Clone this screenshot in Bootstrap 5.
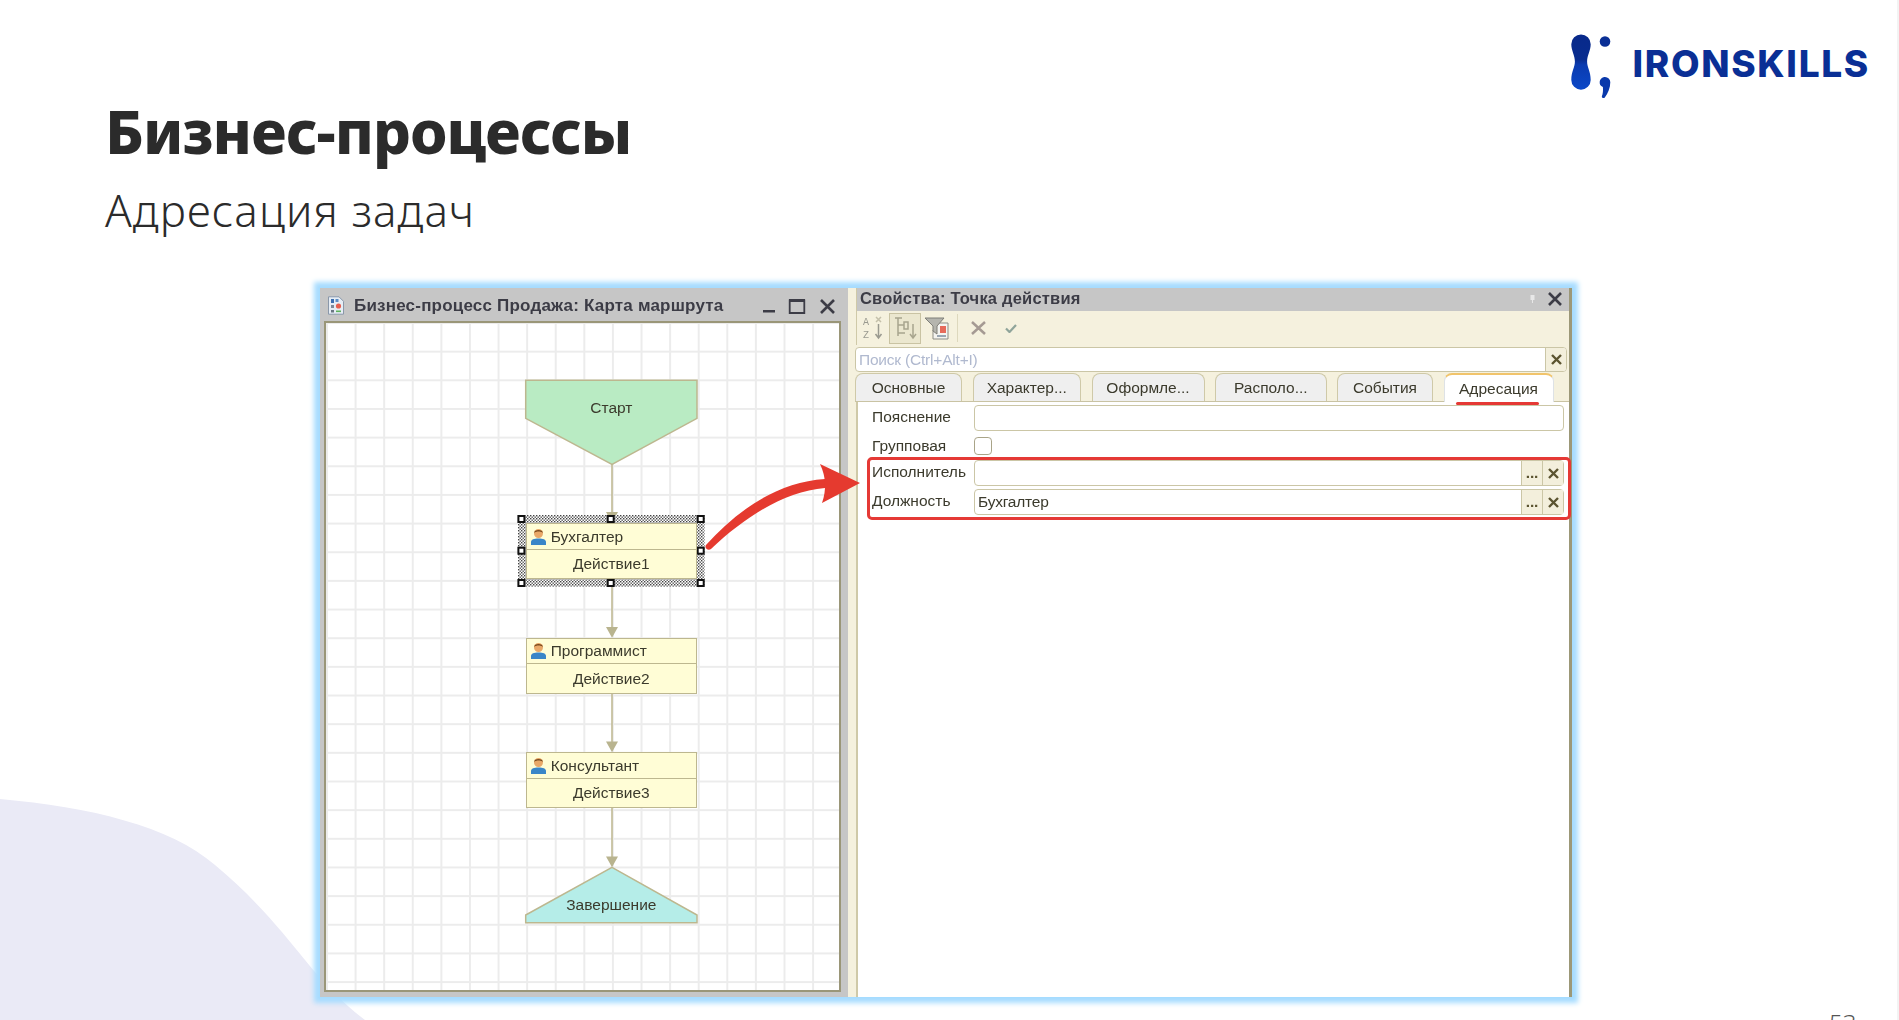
<!DOCTYPE html>
<html lang="ru">
<head>
<meta charset="utf-8">
<title>Бизнес-процессы</title>
<link href="https://cdn.jsdelivr.net/npm/bootstrap@5.3.0/dist/css/bootstrap.min.css" rel="stylesheet">
<style>
html,body{margin:0;background:#fff}
.slide{position:relative;width:1899px;height:1020px;overflow:hidden;background:#fff;border-right:2px solid #f3f3f3;font-family:"Noto Sans","Open Sans",sans-serif;color:#2b2b2b}
.blob{position:absolute;left:0;top:780px;width:380px;height:240px}
.slide-head{position:relative;height:288px;padding:0 27px 0 105px}
.ttl{margin:0;padding-top:92px;font-family:"Noto Sans",sans-serif;font-weight:800;font-size:60px;line-height:78px;letter-spacing:-1.05px;color:#2b2b2b}
.sub{margin:0;padding-top:12px;font-family:"Noto Sans",sans-serif;font-weight:300;font-size:44px;line-height:56px;letter-spacing:1.1px;color:#2b2b2b}
.brand{padding-top:32px;gap:20px}
.brand svg{width:44px;height:70px}
.brand-name{font-family:Inter,sans-serif;font-weight:800;font-size:37px;line-height:1;letter-spacing:1.7px;color:#0a2f95;margin-top:13px}
.shot{position:relative;margin-left:320px;width:1252px;height:709px;box-shadow:0 0 5px 6px #a6dcff;background:#fff}
.shot-inner{width:100%;height:100%;filter:blur(.45px);font-family:"Liberation Sans",sans-serif;font-size:15.5px;color:#3b3a2c}
.route{width:528px;background:#c6c6c6;padding:0 7px 3px 4px}
.route-bar{height:33px;padding:2px 0 0 3px;font-weight:700;font-size:17px;letter-spacing:.2px;color:#3c3c46}
.bar-name{margin-left:9px}
.ctl{margin-left:auto;margin-right:2px}
.canvas{position:relative;width:517px;height:671px;border:2px solid #9a9678;background-color:#fff;background-image:linear-gradient(#ececec 2px,transparent 2px),linear-gradient(90deg,#ececec 2px,transparent 2px);background-size:28.6px 28.67px;background-position:0 -1px}
.diagram{position:absolute;left:0;top:0;width:513px;height:669px}
.proc{position:absolute;left:199.7px;width:171.3px;background:#fffdd6;border:1.5px solid #bdb78f;font-size:15.5px}
.p1{top:200.3px;height:56px}.p2{top:314.7px;height:56px}.p3{top:429.3px;height:56px}
.proc-who{height:25.5px;border-bottom:1.5px solid #bdb78f;padding-left:4px;gap:5px}
.proc-who svg{width:15px;height:17px}
.proc-act{height:28px}
.shape-text{position:absolute;left:199.7px;width:171.3px;text-align:center;line-height:20px}
.s-start{top:75px}.s-end{top:572px}
.strip{width:9px;background:#f5f1de;border-right:1px solid #cfc9a8}
.props{width:712px;background:#fff}
.edge{width:3px;background:#9c9878}
.props-bar{height:23px;background:#c6c6c6;padding:0 7px 2px 3px;font-weight:700;font-size:16.5px;letter-spacing:.2px;color:#3c3c46}
.pin{margin-left:auto;margin-right:13px}
.tools{height:34px;background:#f5f1de}
.tool{width:32px;height:31px;border:1.5px solid transparent}
.tool-on{background:#ebe7cf;border-color:#c9c3a3}
.tool-sep{width:1px;height:28px;background:#ddd8bd;margin:0 13px 0 4px}
.chk{margin-left:19px}
.finder{height:28px;background:#f5f1de;padding:2px 2px 1px 0;margin-left:-2px}
.field{display:flex;align-items:center;height:25px;min-height:0;padding:0 0 0 3px;border:1.5px solid #cbc6a6;border-radius:4px;background:#fff;font-size:15.5px;color:#3b3a2c;line-height:1;letter-spacing:-.2px;box-shadow:none}
.finder .field{color:#b0b9cf;flex:1;overflow:hidden;padding-right:0}
.fld-btn{width:21px;height:100%;background:#f3efdc;border-left:1.5px solid #cbc6a6;display:flex;align-items:center;justify-content:center;font-weight:700;color:#5b5430;flex:none}
.fld-val{flex:1}
.tabs-row{height:29px;background:#f5f1de;gap:10.5px;border-bottom:1.5px solid #c9c3a3;flex-wrap:nowrap;padding-left:0;margin-left:-2px}
.tabs-row .nav-link{height:28px;padding:0;display:flex;align-items:center;justify-content:center;border:1.5px solid #cfc9a8;border-bottom:0;border-radius:8px 8px 0 0;background:#efefef;color:#3b3a2c;font-size:15.5px;margin:0}
.tabs-row .nav-link.active{background:#fff;border-top:2px solid #f1c46b;color:#3b3a2c;position:relative;height:29px}
.t1{width:107px}.t2{width:108.5px}.t3{width:113px}.t4{width:111.5px}.t5{width:96px}.t6{width:110px}
.underline{position:absolute;left:11px;right:14px;bottom:-3px;height:3.5px;background:#e53935;border-radius:2px}
.form-pane{flex:1;background:#fff;border-left:1.5px solid #cfc9a8;padding:3px 5px 0 14px}
.line{height:26px;margin-bottom:3px}
.line-flush{margin-bottom:0}
.line-lbl{width:102px;flex:none;font-size:15.5px;padding-bottom:2px}
.form-pane .field{flex:1;height:26px}
.box{width:18px;height:18px;margin:0 0 2px;border:1.5px solid #a9a488;border-radius:4px;background:#fff}
.frame-red{position:absolute;left:546.5px;top:168.5px;width:704px;height:63px;border:3.5px solid #e53935;border-radius:5px}
.curve{position:absolute;left:380px;top:167px;width:170px;height:95px}
.pg{position:absolute;left:1829px;top:1006px;font-family:"Noto Sans",sans-serif;font-weight:300;font-size:24px;line-height:34px;color:#555}
</style>
</head>
<body>
<div class="slide">
  <svg class="blob" viewBox="0 0 380 240" aria-hidden="true"><path fill="#eaeaf6" d="M0 19C90 27 170 46 215 85C255 118 285 155 305 180C325 205 345 225 365 240H0Z"/></svg>

  <header class="slide-head d-flex justify-content-between">
    <div>
      <h1 class="ttl">Бизнес-процессы</h1>
      <p class="sub">Адресация задач</p>
    </div>
    <div class="brand d-flex align-items-start">
      <svg viewBox="0 0 44 70" aria-hidden="true">
        <defs><linearGradient id="bl" x1="0" y1="0" x2="0" y2="1"><stop offset="0" stop-color="#08298a"/><stop offset=".45" stop-color="#082c8f"/><stop offset=".55" stop-color="#0a3bb0"/><stop offset="1" stop-color="#0b48c8"/></linearGradient></defs>
        <path fill="url(#bl)" d="M3.3 12.2a9.7 9.7 0 0 1 19.4 0c0 6.5-3.6 10.800-3.600 17.300c0 6.500 3.600 9.500 3.600 18.500a9.700 9.700 0 0 1-19.400 0c0-9 3.600-12 3.600-18.500c0-6.500-3.600-10.800-3.600-17.300Z"/>
        <circle cx="37" cy="9.500" r="5.300" fill="#0a2f95"/>
        <path fill="#0a39ab" d="M37 45a5.300 5.300 0 0 1 5.300 5.300c0 6-2.500 11-5.500 15.200c-1 1.300-3.500.3-2.900-1.300c1-2.700 1.300-5.500 1-9.200c-2.600-1-3.400-3-3.200-5c.2-2.800 2.500-5 5.300-5Z"/>
      </svg>
      <div class="brand-name">IRONSKILLS</div>
    </div>
  </header>

  <section class="shot">
    <div class="shot-inner d-flex">
      <div class="route d-flex flex-column">
        <div class="route-bar d-flex align-items-center">
          <svg width="18" height="19" viewBox="0 0 18 19" aria-hidden="true"><path d="M1.500.8H12l4.500 4.500V18.200H1.500Z" fill="#e6edf5" stroke="#8a98aa"/><rect x="4" y="3" width="3" height="4" fill="#3c6fb0"/><rect x="8.500" y="3" width="3" height="3" fill="#5e8dc4"/><circle cx="11.500" cy="10" r="2.600" fill="#e8604f"/><rect x="4" y="9" width="3" height="3" fill="#7d8a99"/><rect x="4" y="14" width="3" height="2.500" fill="#6a7684"/><rect x="9" y="14.500" width="5" height="1.600" fill="#5cb25c"/></svg>
          <span class="bar-name">Бизнес-процесс Продажа: Карта маршрута</span>
          <svg class="ctl" width="78" height="20" viewBox="0 0 78 20" aria-hidden="true"><rect x="2" y="14" width="12" height="2.500" fill="#3c3c46"/><path d="M28.700 4.500H43.300V17H28.700Z" fill="none" stroke="#3c3c46" stroke-width="1.800"/><rect x="28" y="3" width="16" height="3" fill="#3c3c46"/><path d="M60 4L73 17M73 4L60 17" stroke="#3c3c46" stroke-width="2.600"/></svg>
        </div>
        <div class="canvas">
          <svg class="diagram" viewBox="0 0 513 669" aria-hidden="true">
            <defs><pattern id="ht" width="3" height="3" patternUnits="userSpaceOnUse"><rect width="3" height="3" fill="#fff"/><rect width="1.400" height="1.400" fill="#444"/><rect x="1.500" y="1.500" width="1.400" height="1.400" fill="#555"/></pattern></defs>
            <g stroke="#bdb78f" stroke-width="1.500" fill="none"><path d="M286 141V190M286 256V304M286 370V419M286 485V534"/></g>
            <g fill="#b9b48f"><path d="M280 189H292L286 200ZM280 304H292L286 314.700ZM280 418.500H292L286 429.300ZM280 533.500H292L286 544.300Z"/></g>
            <path d="M199.700 57.300H371V95.300L286 141.300L199.700 95.300Z" fill="#b9ebc3" stroke="#bdb78f" stroke-width="1.500"/>
            <path d="M286 544.300L371 592V599.700H199.700V592Z" fill="#b5ede8" stroke="#bdb78f" stroke-width="1.500"/>
            <rect x="192" y="192" width="186.500" height="71.700" fill="url(#ht)"/>
            <g fill="#fff" stroke="#111" stroke-width="2"><rect x="192.400" y="193" width="6" height="6"/><rect x="281.700" y="193" width="6" height="6"/><rect x="371.700" y="193" width="6" height="6"/><rect x="192.400" y="224.700" width="6" height="6"/><rect x="371.700" y="224.700" width="6" height="6"/><rect x="192.400" y="257" width="6" height="6"/><rect x="281.700" y="257" width="6" height="6"/><rect x="371.700" y="257" width="6" height="6"/></g>
          </svg>
          <div class="shape-text s-start">Старт</div>
          <div class="proc p1">
            <div class="proc-who d-flex align-items-center"><svg viewBox="0 0 15 17" aria-hidden="true"><path d="M0 17V14C0 11.500 3 10.500 7.500 10.500S15 11.500 15 14V17Z" fill="#3a86c8"/><circle cx="7.500" cy="5.500" r="4.500" fill="#e9a868"/><path d="M3 5C3 1 12 1 12 5C10 3 5 3 3 5Z" fill="#7a4a1e"/></svg><span>Бухгалтер</span></div>
            <div class="proc-act d-flex align-items-center justify-content-center">Действие1</div>
          </div>
          <div class="proc p2">
            <div class="proc-who d-flex align-items-center"><svg viewBox="0 0 15 17" aria-hidden="true"><path d="M0 17V14C0 11.500 3 10.500 7.500 10.500S15 11.500 15 14V17Z" fill="#3a86c8"/><circle cx="7.500" cy="5.500" r="4.500" fill="#e9a868"/><path d="M3 5C3 1 12 1 12 5C10 3 5 3 3 5Z" fill="#7a4a1e"/></svg><span>Программист</span></div>
            <div class="proc-act d-flex align-items-center justify-content-center">Действие2</div>
          </div>
          <div class="proc p3">
            <div class="proc-who d-flex align-items-center"><svg viewBox="0 0 15 17" aria-hidden="true"><path d="M0 17V14C0 11.500 3 10.500 7.500 10.500S15 11.500 15 14V17Z" fill="#3a86c8"/><circle cx="7.500" cy="5.500" r="4.500" fill="#e9a868"/><path d="M3 5C3 1 12 1 12 5C10 3 5 3 3 5Z" fill="#7a4a1e"/></svg><span>Консультант</span></div>
            <div class="proc-act d-flex align-items-center justify-content-center">Действие3</div>
          </div>
          <div class="shape-text s-end">Завершение</div>
        </div>
      </div>
      <div class="strip"></div>
      <div class="props d-flex flex-column">
        <div class="props-bar d-flex align-items-center">
          <span>Свойства: Точка действия</span>
          <svg class="pin" width="5" height="9" viewBox="0 0 5 9" aria-hidden="true"><rect x=".5" y="1" width="4" height="5" fill="#e8e8e8"/><rect x="2" y="6" width="1" height="3" fill="#e8e8e8"/></svg>
          <svg width="14" height="14" viewBox="0 0 14 14" aria-hidden="true"><path d="M1 1L13 13M13 1L1 13" stroke="#3c3c46" stroke-width="2.600"/></svg>
        </div>
        <div class="tools d-flex align-items-center">
          <div class="tool d-flex align-items-center justify-content-center">
            <svg width="20" height="24" viewBox="0 0 20 24" aria-hidden="true"><text x="0" y="9" font-size="10" fill="#9a9a90" font-family="Liberation Mono">A</text><text x="0" y="22" font-size="10" fill="#9a9a90" font-family="Liberation Mono">Z</text><path d="M13 1L18 6M18 1L13 6" stroke="#c4c0aa" stroke-width="1.500"/><path d="M15.500 8V21M12.500 18L15.500 22L18.500 18" fill="none" stroke="#9a9a90" stroke-width="1.500"/></svg>
          </div>
          <div class="tool tool-on d-flex align-items-center justify-content-center">
            <svg width="24" height="24" viewBox="0 0 24 24" aria-hidden="true"><path d="M2 2H9M5 2V20M5 9H11V6H15V13H11V9M5 17H12" fill="none" stroke="#a8a58e" stroke-width="1.500"/><path d="M20 8V21M17 18L20 22L23 18" fill="none" stroke="#a8a58e" stroke-width="1.500"/></svg>
          </div>
          <div class="tool d-flex align-items-center justify-content-center">
            <svg width="24" height="23" viewBox="0 0 24 23" aria-hidden="true"><path d="M11 6H23V22H8V13" fill="#f4f4f0" stroke="#8d8d85"/><path d="M0 1H19L12 9V17L8 14V9Z" fill="#b5b5ae" stroke="#7f7f78"/><rect x="15" y="9" width="6" height="7" fill="#e66a5a"/><rect x="12" y="18" width="9" height="2" fill="#9aa6b2"/></svg>
          </div>
          <div class="tool-sep"></div>
          <svg width="15" height="14" viewBox="0 0 15 14" aria-hidden="true"><path d="M1 1L14 13M14 1L1 13" stroke="#a59a93" stroke-width="2.500"/></svg>
          <svg class="chk" width="12" height="9" viewBox="0 0 12 9" aria-hidden="true"><path d="M1 4.500L4.500 8L11 1" fill="none" stroke="#8fa49a" stroke-width="2.200"/></svg>
        </div>
        <div class="finder d-flex">
          <div class="form-control field">Поиск (Ctrl+Alt+I)<span class="fld-btn ms-auto"><svg width="11" height="11" viewBox="0 0 11 11" aria-hidden="true"><path d="M1 1L10 10M10 1L1 10" stroke="#5b5430" stroke-width="2.400"/></svg></span></div>
        </div>
        <ul class="nav nav-tabs tabs-row">
          <li class="nav-item"><a class="nav-link t1" href="#">Основные</a></li>
          <li class="nav-item"><a class="nav-link t2" href="#">Характер...</a></li>
          <li class="nav-item"><a class="nav-link t3" href="#">Оформле...</a></li>
          <li class="nav-item"><a class="nav-link t4" href="#">Располо...</a></li>
          <li class="nav-item"><a class="nav-link t5" href="#">События</a></li>
          <li class="nav-item"><a class="nav-link active t6" href="#">Адресация<span class="underline"></span></a></li>
        </ul>
        <div class="form-pane">
          <div class="line d-flex align-items-center"><span class="line-lbl">Пояснение</span><div class="form-control field"></div></div>
          <div class="line line-flush d-flex align-items-center"><span class="line-lbl">Групповая</span><input class="form-check-input box" type="checkbox"></div>
          <div class="line d-flex align-items-center"><span class="line-lbl">Исполнитель</span><div class="form-control field"><span class="fld-val"></span><span class="fld-btn">...</span><span class="fld-btn"><svg width="11" height="11" viewBox="0 0 11 11" aria-hidden="true"><path d="M1 1L10 10M10 1L1 10" stroke="#5b5430" stroke-width="2.400"/></svg></span></div></div>
          <div class="line d-flex align-items-center"><span class="line-lbl">Должность</span><div class="form-control field"><span class="fld-val">Бухгалтер</span><span class="fld-btn">...</span><span class="fld-btn"><svg width="11" height="11" viewBox="0 0 11 11" aria-hidden="true"><path d="M1 1L10 10M10 1L1 10" stroke="#5b5430" stroke-width="2.400"/></svg></span></div></div>
        </div>
      </div>
      <div class="edge"></div>
    </div>
    <div class="frame-red"></div>
    <svg class="curve" viewBox="0 0 170 95" aria-hidden="true"><path fill="#e53a2f" d="M6 90C35 58 75 27 125 24L125 33C85 36 45 62 11 94C8 96 4 93 6 90Z"/><path fill="#e53a2f" d="M120 9L160 28L122 48Q129 28 120 9Z"/></svg>
  </section>
  <div class="pg">53</div>
</div>
<script src="https://cdn.jsdelivr.net/npm/bootstrap@5.3.0/dist/js/bootstrap.bundle.min.js"></script>
</body>
</html>
